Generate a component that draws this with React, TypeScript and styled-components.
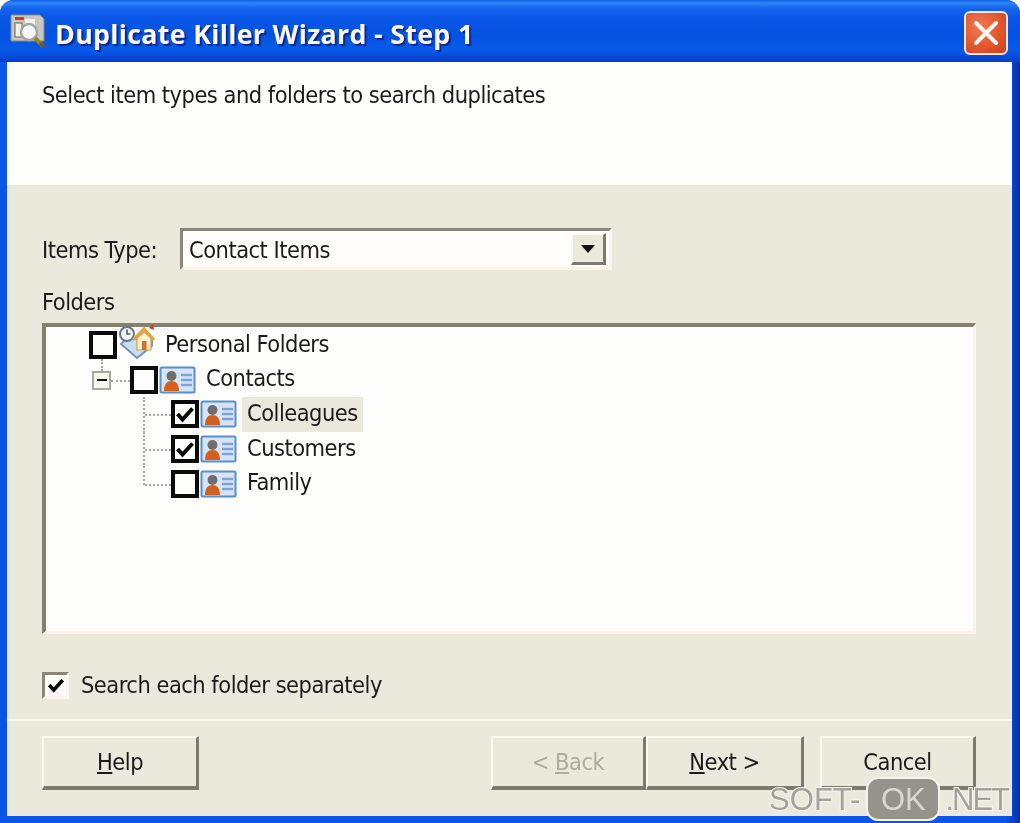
import React from "react";
import styled, { createGlobalStyle } from "styled-components";

const Global = createGlobalStyle`
  html, body { margin: 0; padding: 0; background: #ffffff; }
  #root { width: 1020px; height: 823px; overflow: hidden; }
  * { box-sizing: border-box; }
`;

const Window = styled.div`
  position: relative;
  width: 1020px;
  height: 823px;
  display: flex;
  flex-direction: column;
  border-radius: 14px 14px 0 0;
  overflow: hidden;
  font-family: "DejaVu Sans", "Noto Sans", sans-serif;
  font-stretch: condensed;
  letter-spacing: -0.5px;
  color: #1a1a1a;
  filter: blur(0.5px);
  background: linear-gradient(90deg, #0a55e6 0, #0a55e6 1005px, #0a44cc 1012px, #0230a8 1020px);
`;

const TitleBar = styled.div`
  height: 62px;
  flex: none;
  display: flex;
  align-items: center;
  padding: 0 12px 0 10px;
  background: linear-gradient(180deg, #0f5fe6 0, #2f86f6 3px, #1565ee 8px, #0a56e6 18px, #0453e2 36px, #0a5ae8 50px, #0448d4 58px, #0340c4 62px);
`;

const TitleIcon = styled.svg`
  width: 38px;
  height: 36px;
  flex: none;
  margin-top: -2px;
`;

const TitleText = styled.div`
  margin: 5px 0 0 7px;
  font-family: "Open Sans", "DejaVu Sans", sans-serif;
  font-stretch: normal;
  font-weight: 700;
  font-size: 26.8px;
  letter-spacing: 0.3px;
  color: #fff8f2;
  text-shadow: 2px 2px 1px #0a2a90;
  white-space: nowrap;
`;

const CloseButton = styled.div`
  margin-left: auto;
  margin-top: 4px;
  width: 44px;
  height: 44px;
  border: 2px solid #f4e6dc;
  border-radius: 6px;
  background: radial-gradient(circle at 35% 35%, #ee7a54 0, #e2562e 55%, #c8401c 100%);
  display: flex;
  align-items: center;
  justify-content: center;
`;

const Client = styled.div`
  flex: 1;
  margin: 0 8px 7px 7px;
  display: flex;
  flex-direction: column;
  background: #ebe8dc;
  min-height: 0;
`;

const Header = styled.div`
  height: 123px;
  flex: none;
  background: #fdfefc;
  padding: 17px 0 0 35px;
  font-size: 23.4px;
  line-height: 32px;
`;

const Body = styled.div`
  flex: 1;
  padding: 43px 36px 0 35px;
  display: flex;
  flex-direction: column;
`;

const TypeRow = styled.div`
  display: flex;
  align-items: center;
  height: 42px;
  font-size: 23.4px;
`;

const TypeLabel = styled.div`
  width: 138px;
  flex: none;
  padding-top: 1px;
`;

const Combo = styled.div`
  width: 432px;
  height: 42px;
  display: flex;
  align-items: center;
  background: #fffefb;
  border-style: solid;
  border-width: 3px;
  border-color: #8a8778 #fbf6ec #fbf3e6 #8a8778;
  padding: 0 3px 0 6px;
`;

const ComboValue = styled.div`
  flex: 1;
  padding-top: 1px;
`;

const ComboArrow = styled.div`
  width: 35px;
  height: 32px;
  background: #ebe8dc;
  border-style: solid;
  border-width: 2px 3px 3px 2px;
  border-color: #fdfbf2 #7d7a6c #7d7a6c #fdfbf2;
  display: flex;
  align-items: center;
  justify-content: center;
  &::after {
    content: "";
    border-style: solid;
    border-width: 8px 7px 0 7px;
    border-color: #111 transparent transparent transparent;
  }
`;

const FoldersLabel = styled.div`
  margin-top: 17px;
  height: 36px;
  line-height: 30px;
  font-size: 23.4px;
`;

const TreePanel = styled.div`
  height: 311px;
  width: 934px;
  flex: none;
  background: #fdfefc;
  border-style: solid;
  border-width: 4px 3px 3px 4px;
  border-color: #84816f #fbf6ec #fbf3e6 #84816f;
  padding: 1px 0 0 43px;
`;

const Row = styled.div`
  position: relative;
  height: 34.6px;
  display: flex;
  align-items: center;
  padding-left: ${(p: { $depth: number }) => p.$depth * 41}px;
  font-size: 23.4px;
`;

const TreeCheck = styled.div`
  width: 28px;
  height: 28px;
  flex: none;
  border: 4px solid #0a0a0a;
  background: #fdfefc;
  display: flex;
  align-items: center;
  justify-content: center;
`;

const RowIcon = styled.svg`
  width: 37px;
  height: 30px;
  flex: none;
  margin-left: 1px;
`;

const TallRowIcon = styled(RowIcon)`
  height: 36px;
  margin-top: -6px;
`;

const RowLabel = styled.div<{ $selected?: boolean }>`
  margin-left: 5px;
  padding: 0 5px;
  height: 35px;
  line-height: 32px;
  background: ${(p) => (p.$selected ? "#ebe8dc" : "transparent")};
  white-space: nowrap;
`;

const DotsH = styled.div<{ $left: number; $width: number }>`
  position: absolute;
  top: 50%;
  left: ${(p) => p.$left}px;
  width: ${(p) => p.$width}px;
  border-top: 2px dotted #a9a99f;
`;

const DotsV = styled.div<{ $left: number; $top: number; $height: number }>`
  position: absolute;
  top: ${(p) => p.$top}px;
  left: ${(p) => p.$left}px;
  height: ${(p) => p.$height}px;
  border-left: 2px dotted #a9a99f;
`;

const Expander = styled.div`
  position: absolute;
  left: 3px;
  top: 8px;
  width: 19px;
  height: 19px;
  border: 2px solid #a8a89c;
  background: #f6f6ee;
  display: flex;
  align-items: center;
  justify-content: center;
  &::after {
    content: "";
    width: 10px;
    height: 2px;
    background: #111;
  }
`;

const OptionRow = styled.div`
  margin-top: 37px;
  height: 28px;
  display: flex;
  align-items: center;
  font-size: 23.4px;
`;

const OptionBox = styled.div`
  width: 27px;
  height: 27px;
  flex: none;
  border-style: solid;
  border-width: 3px;
  border-color: #8a8778 #fbf6ec #fbf3e6 #8a8778;
  background: #fdfefc;
  display: flex;
  align-items: center;
  justify-content: center;
`;

const OptionText = styled.div`
  margin-left: 12px;
`;

const Separator = styled.div`
  margin-top: 20px;
  height: 2px;
  flex: none;
  background: #f8f6ea;
`;

const Footer = styled.div`
  flex: 1;
  padding: 15px 36px 0 35px;
  display: flex;
  align-items: flex-start;
`;

const WizardButton = styled.div<{ $disabled?: boolean; $gap?: number; $w?: number }>`
  width: ${(p) => p.$w ?? 157}px;
  height: 54px;
  flex: none;
  margin-left: ${(p) => p.$gap ?? 0}px;
  background: #ebe8dc;
  border-style: solid;
  border-width: 2px 3px 4px 2px;
  border-color: #fbf8ee #7d7a6c #7d7a6c #fbf8ee;
  display: flex;
  align-items: center;
  justify-content: center;
  font-size: 23.4px;
  color: ${(p) => (p.$disabled ? "#aeaca0" : "#1a1a1a")};
`;

const FooterSpacer = styled.div`
  flex: 1;
`;

const Watermark = styled.div`
  position: absolute;
  right: 12px;
  bottom: 2px;
  display: flex;
  align-items: center;
  font-family: "Liberation Sans", Arial, sans-serif;
  font-stretch: normal;
  font-size: 31px;
  letter-spacing: 0;
  color: #a3a399;
  -webkit-text-stroke: 2px #f6f6f0;
  paint-order: stroke fill;
  line-height: 41px;
`;

const WatermarkBadge = styled.span`
  display: inline-block;
  margin: 0 5px 0 6px;
  width: 74px;
  text-align: center;
  height: 44px;
  border: 2px solid #f4f4ee;
  border-radius: 12px;
  background: #94948a;
  color: #d8d8d0;
  -webkit-text-stroke: 0;
`;

const WatermarkSuffix = styled.span`
  letter-spacing: -2px;
`;

const CardIcon = () => (
  <RowIcon viewBox="0 0 37 30">
    <rect x="1.5" y="2.5" width="34" height="25" rx="1.5" fill="#d6e4f6" stroke="#5a8fce" strokeWidth="2" />
    <circle cx="12.5" cy="11" r="5" fill="#6e6e6e" />
    <path d="M5 26c0-7 3-10 7.5-10s7.5 3 7.5 10z" fill="#d2601c" />
    <path d="M22 10h11M22 15h11M22 20h11" stroke="#7ba4d6" strokeWidth="2.4" />
  </RowIcon>
);

const FolderIcon = () => (
  <TallRowIcon viewBox="0 0 37 36">
    <path d="M3 20l16 14 15-12V15H8z" fill="#c8dcf4" stroke="#6f94bf" strokeWidth="1.8" />
    <circle cx="9" cy="10" r="7" fill="#f4f6fa" stroke="#66768c" strokeWidth="2" />
    <path d="M9 5.5V10h3.5" stroke="#4e5e74" strokeWidth="1.6" fill="none" />
    <path d="M15 16L26 5l10 11" fill="none" stroke="#e3a63c" strokeWidth="3" />
    <path d="M19 14v12h14V14L26 8z" fill="#fbf0cc" stroke="#d8a044" strokeWidth="1.2" />
    <rect x="24" y="17" width="4.5" height="9" fill="#c9762a" />
    <path d="M31 4l4-4 1 6z" fill="#d83a20" />
  </TallRowIcon>
);

const Check = ({ size }: { size: number }) => (
  <svg width={size} height={size} viewBox="0 0 20 20">
    <path d="M2.5 10l5 5.5L17.5 4.5" fill="none" stroke="#0a0a0a" strokeWidth="4" />
  </svg>
);

export default function App() {
  return (
    <Window>
      <Global />
      <TitleBar>
        <TitleIcon viewBox="0 0 38 36">
          <path d="M1 3h29l4 4v22H1z" fill="#c9c6c0" stroke="#8a8880" strokeWidth="1" />
          <rect x="5" y="5" width="9" height="3" fill="#e03428" />
          <rect x="5" y="11" width="7" height="14" fill="#f2f1ec" stroke="#77756e" strokeWidth="1.2" />
          <rect x="15" y="7" width="10" height="9" fill="#f2f1ec" />
          <circle cx="19" cy="20" r="8" fill="#f6f6f8" stroke="#a5a5a8" strokeWidth="2.5" />
          <path d="M25 26l8 8" stroke="#8c8a22" strokeWidth="4" />
          <path d="M30 31l4 4" stroke="#7a4a20" strokeWidth="3" />
        </TitleIcon>
        <TitleText>Duplicate Killer Wizard - Step 1</TitleText>
        <CloseButton>
          <svg width="28" height="28" viewBox="0 0 28 28">
            <path d="M4 4l20 20M24 4L4 24" stroke="#fff6f0" strokeWidth="4" strokeLinecap="round" />
          </svg>
        </CloseButton>
      </TitleBar>
      <Client>
        <Header>Select item types and folders to search duplicates</Header>
        <Body>
          <TypeRow>
            <TypeLabel>Items Type:</TypeLabel>
            <Combo>
              <ComboValue>Contact Items</ComboValue>
              <ComboArrow />
            </Combo>
          </TypeRow>
          <FoldersLabel>Folders</FoldersLabel>
          <TreePanel>
            <Row $depth={0}>
              <TreeCheck />
              <FolderIcon />
              <RowLabel>Personal Folders</RowLabel>
            </Row>
            <Row $depth={1}>
              <DotsV $left={12} $top={-4} $height={12} />
              <Expander />
              <DotsH $left={22} $width={19} />
              <TreeCheck />
              <CardIcon />
              <RowLabel>Contacts</RowLabel>
            </Row>
            <Row $depth={2}>
              <DotsV $left={54} $top={0} $height={36} />
              <DotsH $left={56} $width={26} />
              <TreeCheck>
                <Check size={20} />
              </TreeCheck>
              <CardIcon />
              <RowLabel $selected>Colleagues</RowLabel>
            </Row>
            <Row $depth={2}>
              <DotsV $left={54} $top={0} $height={36} />
              <DotsH $left={56} $width={26} />
              <TreeCheck>
                <Check size={20} />
              </TreeCheck>
              <CardIcon />
              <RowLabel>Customers</RowLabel>
            </Row>
            <Row $depth={2}>
              <DotsV $left={54} $top={0} $height={19} />
              <DotsH $left={56} $width={26} />
              <TreeCheck />
              <CardIcon />
              <RowLabel>Family</RowLabel>
            </Row>
          </TreePanel>
          <OptionRow>
            <OptionBox>
              <Check size={18} />
            </OptionBox>
            <OptionText>Search each folder separately</OptionText>
          </OptionRow>
        </Body>
        <Separator />
        <Footer>
          <WizardButton>
            <span>
              <u>H</u>elp
            </span>
          </WizardButton>
          <FooterSpacer />
          <WizardButton $disabled $w={155}>
            <span>
              &lt; <u>B</u>ack
            </span>
          </WizardButton>
          <WizardButton $w={158}>
            <span>
              <u>N</u>ext &gt;
            </span>
          </WizardButton>
          <WizardButton $gap={16} $w={156}>
            Cancel
          </WizardButton>
        </Footer>
      </Client>
      <Watermark>
        SOFT-<WatermarkBadge>OK</WatermarkBadge>
        <WatermarkSuffix>.NET</WatermarkSuffix>
      </Watermark>
    </Window>
  );
}
